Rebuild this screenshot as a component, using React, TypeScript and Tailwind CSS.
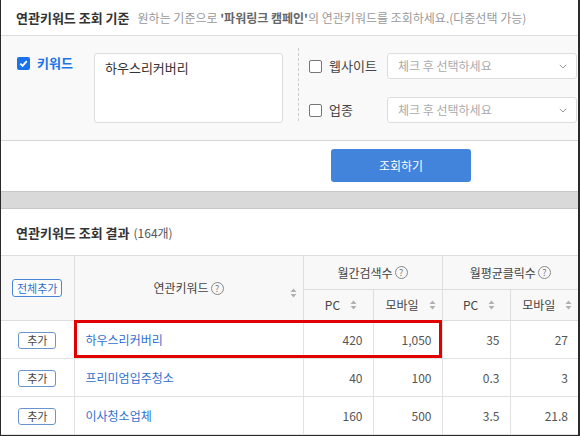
import React from 'react';

const font = { fontFamily: '"Noto Sans CJK KR", "Noto Sans", sans-serif' };

function SortIcon() {
  return (
    <svg width="7" height="10" viewBox="0 0 7 10" className="inline-block">
      <path d="M3.5 0.5 L6.5 4 L0.5 4 Z" fill="#b0b0b0" />
      <path d="M3.5 9.5 L6.5 6 L0.5 6 Z" fill="#b0b0b0" />
    </svg>
  );
}

function HelpIcon() {
  return (
    <span className="ml-[2px] inline-flex h-[13px] w-[13px] items-center justify-center rounded-full border border-[#888] text-[9px] leading-none text-[#777]">
      ?
    </span>
  );
}

function Check({ checked }: { checked?: boolean }) {
  if (checked) {
    return (
      <span className="flex h-[13px] w-[13px] items-center justify-center rounded-[2px] bg-[#1a73e8]">
        <svg width="9" height="9" viewBox="0 0 10 10">
          <path d="M1.5 5.2 L4 7.6 L8.6 2.4" stroke="#fff" strokeWidth="2" fill="none" />
        </svg>
      </span>
    );
  }
  return <span className="block h-[13px] w-[13px] rounded-[2px] border border-[#767676] bg-white" />;
}

function Select() {
  return (
    <div className="flex h-[26px] w-[190px] items-center justify-between rounded-[3px] border border-[#dcdcdc] bg-white pl-[10px] pr-[9px] text-[12px] text-[#aaa]">
      <span>체크 후 선택하세요</span>
      <svg width="8" height="5" viewBox="0 0 8 5">
        <path d="M0.8 0.8 L4 4 L7.2 0.8" stroke="#999" strokeWidth="1" fill="none" />
      </svg>
    </div>
  );
}

const rows = [
  { kw: '하우스리커버리', pc: '420', mo: '1,050', cpc: '35', cmo: '27' },
  { kw: '프리미엄입주청소', pc: '40', mo: '100', cpc: '0.3', cmo: '3' },
  { kw: '이사청소업체', pc: '160', mo: '500', cpc: '3.5', cmo: '21.8' },
];

export default function App() {
  return (
    <div
      className="h-[436px] w-[580px] overflow-hidden border-b border-l border-r-2 border-[#2a2a2a] bg-white text-[#333]"
      style={font}
    >
      <div className="flex h-[36px] items-center gap-[8px] border-b border-[#dcdcdc] px-[15px]">
        <span className="text-[13px] font-bold">연관키워드 조회 기준</span>
        <span className="text-[12px] text-[#999]">
          원하는 기준으로 <b className="text-[#666]">'파워링크 캠페인'</b>의 연관키워드를 조회하세요.(다중선택 가능)
        </span>
      </div>

      <div className="flex h-[105px] border-b border-[#d6d6d6] bg-[#f9f9f9] pt-[17px]">
        <div className="flex w-[297px] pl-[16px]">
          <div className="flex h-[20px] w-[77px] items-center gap-[7px]">
            <Check checked />
            <span className="text-[13px] font-bold text-[#1a73e8]">키워드</span>
          </div>
          <div className="h-[70px] w-[189px] rounded-[3px] border border-[#dcdcdc] bg-white px-[10px] py-[4px] text-[13px] text-[#333]">
            하우스리커버리
          </div>
        </div>
        <div className="mb-[19px] mt-[-5px] border-l border-dashed border-[#ccc]" />
        <div className="flex flex-col gap-[18px] pl-[10px] pt-[0px]">
          <div className="flex items-center">
            <div className="flex w-[78px] items-center gap-[7px]">
              <Check />
              <span className="text-[13px] text-[#444]">웹사이트</span>
            </div>
            <Select />
          </div>
          <div className="flex items-center">
            <div className="flex w-[78px] items-center gap-[7px]">
              <Check />
              <span className="text-[13px] text-[#444]">업종</span>
            </div>
            <Select />
          </div>
        </div>
      </div>

      <div className="flex h-[50px] justify-center pl-[223px] pt-[8px]">
        <button className="h-[33px] w-[140px] rounded-[3px] bg-[#4283dc] text-[12px] text-white">조회하기</button>
      </div>

      <div className="h-[18px] border-y border-[#c8c8c8] bg-[#d9d9d9]" />

      <div className="flex h-[46px] items-center px-[15px] pt-[2px]">
        <span className="text-[13px] font-bold">연관키워드 조회 결과</span>
        <span className="ml-[4px] text-[12px] text-[#555]">(164개)</span>
      </div>

      <div className="relative">
        <table className="w-[577px] table-fixed border-collapse text-[12px]">
          <colgroup>
            <col className="w-[73px]" />
            <col className="w-[229px]" />
            <col className="w-[70px]" />
            <col className="w-[69px]" />
            <col className="w-[68px]" />
            <col className="w-[68px]" />
          </colgroup>
          <thead className="bg-[#f8f8f8] text-[#444]">
            <tr className="h-[34px]">
              <th rowSpan={2} className="border border-l-0 border-[#dedede] font-normal">
                <span className="inline-block h-[18px] rounded-[3px] border border-[#4a86d8] bg-white px-[4px] text-[11px] leading-[16px] text-[#2f6fcf]">
                  전체추가
                </span>
              </th>
              <th rowSpan={2} className="relative border border-[#dedede] font-normal">
                <span className="inline-flex items-center">
                  연관키워드
                  <HelpIcon />
                </span>
                <span className="absolute right-[6px] top-[26px]">
                  <SortIcon />
                </span>
              </th>
              <th colSpan={2} className="border border-[#dedede] font-normal">
                <span className="inline-flex items-center">
                  월간검색수
                  <HelpIcon />
                </span>
              </th>
              <th colSpan={2} className="border border-r-0 border-[#dedede] font-normal">
                <span className="inline-flex items-center">
                  월평균클릭수
                  <HelpIcon />
                </span>
              </th>
            </tr>
            <tr className="h-[31px]">
              {['PC', '모바일', 'PC', '모바일'].map((t, i) => (
                <th key={i} className={'border border-[#dedede] font-normal' + (i === 3 ? ' border-r-0' : '')}>
                  <span className="inline-flex items-center gap-[10px] pl-[6px]">
                    {t}
                    <SortIcon />
                  </span>
                </th>
              ))}
            </tr>
          </thead>
          <tbody className="text-[#555]">
            {rows.map((r) => (
              <tr key={r.kw} className="h-[38px]">
                <td className="border border-l-0 border-[#e2e2e2] text-center">
                  <span className="inline-block h-[17px] rounded-[3px] border border-[#6a94d0] bg-white px-[8px] text-[11px] leading-[15px] text-[#444]">
                    추가
                  </span>
                </td>
                <td className="border border-[#e2e2e2] pl-[11px] text-[12px] text-[#2f6fcf]">{r.kw}</td>
                <td className="border border-[#e2e2e2] pr-[10px] text-right">{r.pc}</td>
                <td className="border border-[#e2e2e2] pr-[10px] text-right">{r.mo}</td>
                <td className="border border-[#e2e2e2] pr-[10px] text-right">{r.cpc}</td>
                <td className="border border-r-0 border-[#e2e2e2] pr-[10px] text-right">{r.cmo}</td>
              </tr>
            ))}
          </tbody>
        </table>
        <div className="absolute left-[73px] top-[65px] h-[38px] w-[368px] border-[3px] border-[#e00000]" />
      </div>
    </div>
  );
}
